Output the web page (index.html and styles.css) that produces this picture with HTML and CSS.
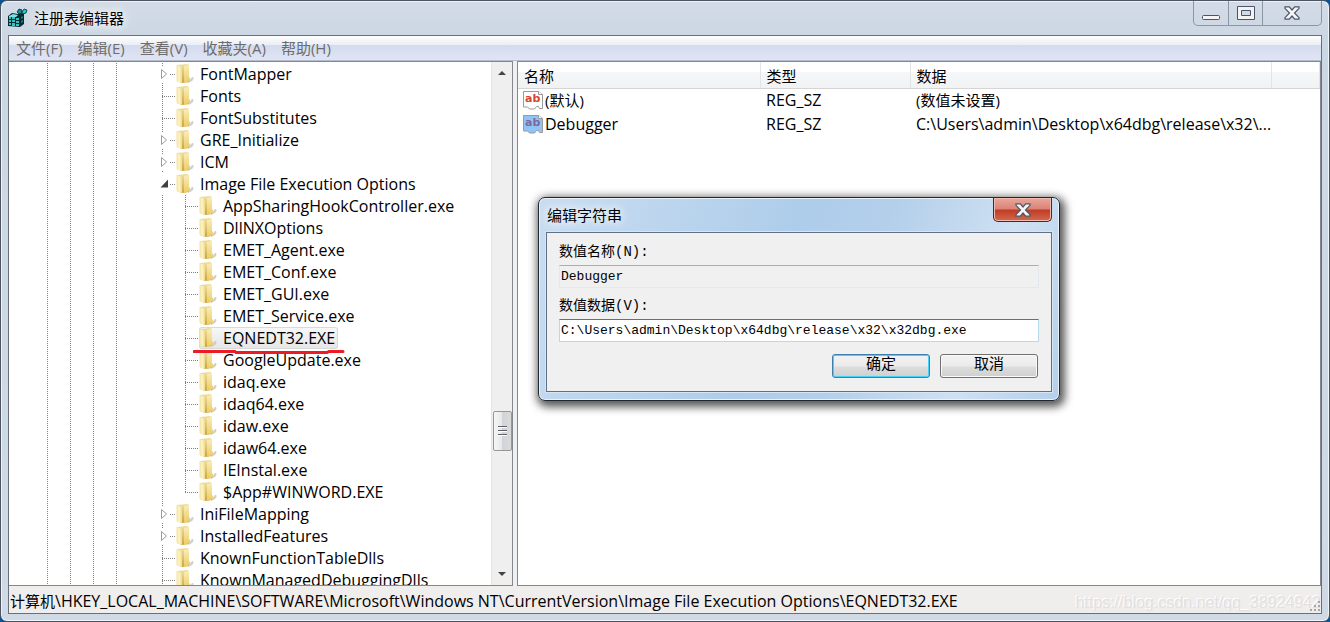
FILE: index.html
```html
<!DOCTYPE html>
<html lang="zh-CN">
<head>
    <meta charset="UTF-8">
    <meta name="viewport" content="width=device-width, initial-scale=1.0">
    <title>注册表编辑器</title>
    <link rel="stylesheet" href="styles.css">
</head>
<body>
    <svg class="defs" width="0" height="0" aria-hidden="true">
        <defs>
            <linearGradient id="gold" x1="0" x2="1" y1="0" y2="0">
                <stop offset="0" stop-color="#f3e3a0"/>
                <stop offset=".5" stop-color="#fdf3c4"/>
                <stop offset="1" stop-color="#f0d98a"/>
            </linearGradient>
            <linearGradient id="flap" x1="0" x2="0" y1="0" y2="1">
                <stop offset="0" stop-color="#f9edb8"/>
                <stop offset="1" stop-color="#eccb62"/>
            </linearGradient>
            <linearGradient id="fold" x1="0" x2="0" y1="0" y2="1">
                <stop offset="0" stop-color="#efdf9f"/>
                <stop offset="1" stop-color="#c9a544"/>
            </linearGradient>
            <symbol id="folder" viewBox="0 0 18 20">
                <path d="M12 18l4-5c2 0 2 2 0 4l-4 2z" fill="#c4c4c4" opacity=".8"/>
                <path d="M1 1l10-1 2 1v17l-7 1-5-2z" fill="url(#fold)"/>
                <path d="M8 2l5-1v12l1 1v3l-6 2z" fill="url(#flap)"/>
                <path d="M.5 1l5.500 2v16L.5 17z" fill="url(#gold)"/>
            </symbol>
            <symbol id="string" viewBox="0 0 20 20">
                <path d="M.5 1.500h15l4 3v14h-3l-1-2h-2l-2 2.500h-5l-2-2h-4z" fill="currentColor" stroke="#9a9a9a"/>
                <path d="M15.500 1.500v3h4" fill="#fff" stroke="#9a9a9a"/>
            </symbol>
            <symbol id="cross" viewBox="0 0 16 14">
                <path d="M1 .8h4.300L8 4 10.700.8H15v1.500L10.500 7l4.500 4.700v1.500h-4.300L8 10l-2.700 3.200H1v-1.500L5.500 7 1 2.300z" fill="#f6f6f6" stroke="#4c5567" stroke-width="1.200"/>
            </symbol>
        </defs>
    </svg>

    <div class="window">
        <header class="title-bar">
            <svg class="app-icon" viewBox="0 0 20 20" aria-hidden="true">
                <path d="M0 8l4-3 6 1 4-1 2 1v10l-4 3-12-1z" fill="#062a2c"/>
                <path d="M1 8l4-2 5 1-2 2H1z" fill="#7fe3e3"/>
                <path d="M1 9h2v2H1zM4 9h3v2H4zM8 10h3v2H8zM1 12h2v2H1zM4 12h3v2H4zM8 13h3v2H8zM1 15h2v2H1zM4 15h3v3H4zM8 16h3v2H8z" fill="#2fc4c6"/>
                <path d="M13 9l2-1v2l-2 1zM13 13l2-1v2l-2 1z" fill="#0e7f84"/>
                <path d="M9 4l2-3 3 1v3l-3 1z" fill="#158a8e" stroke="#062a2c" stroke-width=".8"/>
                <path d="M14 4l2-3 3 1-1 3-3 1z" fill="#2fc4c6" stroke="#062a2c" stroke-width=".8"/>
            </svg>
            <h1 class="title">注册表编辑器</h1>
            <div class="window-buttons">
                <button class="win-btn" aria-label="最小化">
                    <svg width="18" height="6" viewBox="0 0 18 6"><rect x=".5" y=".5" width="17" height="4" rx="1" fill="#f4f4f4" stroke="#4c5567"/></svg>
                </button>
                <button class="win-btn" aria-label="最大化">
                    <svg width="18" height="14" viewBox="0 0 18 14"><path d="M.5.5h17v13H.5zM4.500 4.500v5h9v-5z" fill="#f4f4f4" fill-rule="evenodd" stroke="#4c5567"/></svg>
                </button>
                <button class="win-btn win-close" aria-label="关闭">
                    <svg width="16" height="14"><use href="#cross"/></svg>
                </button>
            </div>
        </header>

        <div class="client">
            <nav class="menu-bar">
                <button>文件(F)</button>
                <button>编辑(E)</button>
                <button>查看(V)</button>
                <button>收藏夹(A)</button>
                <button>帮助(H)</button>
            </nav>

            <main class="panes">
                <section class="tree-pane">
                    <ul class="tree" id="tree"></ul>
                    <div class="scrollbar">
                        <span class="arrow-up"></span>
                        <span class="thumb"><i></i><i></i><i></i></span>
                        <span class="arrow-down"></span>
                    </div>
                </section>

                <section class="list-pane">
                    <table class="values">
                        <thead>
                            <tr><th class="col-name">名称</th><th class="col-type">类型</th><th class="col-data">数据</th><th></th></tr>
                        </thead>
                        <tbody>
                            <tr>
                                <td><span class="value-name"><span class="value-icon"><svg><use href="#string"/></svg><b>ab</b></span><span class="cjk">(默认)</span></span></td>
                                <td>REG_SZ</td>
                                <td class="cjk">(数值未设置)</td>
                                <td></td>
                            </tr>
                            <tr>
                                <td><span class="value-name"><span class="value-icon selected"><svg><use href="#string"/></svg><b>ab</b></span>Debugger</span></td>
                                <td>REG_SZ</td>
                                <td>C:\Users\admin\Desktop\x64dbg\release\x32\...</td>
                                <td></td>
                            </tr>
                        </tbody>
                    </table>
                </section>
            </main>

            <footer class="status-bar">
                <span class="cjk">计算机</span><span>\HKEY_LOCAL_MACHINE\SOFTWARE\Microsoft\Windows NT\CurrentVersion\Image File Execution Options\EQNEDT32.EXE</span>
                <span class="watermark">https://blog.csdn.net/qq_38924942</span>
                <svg class="grip" viewBox="0 0 12 12" aria-hidden="true"><path d="M9 1h2v2H9zM5 5h2v2H5zM9 5h2v2H9zM1 9h2v2H1zM5 9h2v2H5zM9 9h2v2H9z" fill="#a5a5ab"/></svg>
            </footer>
        </div>
    </div>

    <form class="dialog" role="dialog" aria-labelledby="dialog-title">
        <div class="dialog-bar">
            <h2 class="title" id="dialog-title">编辑字符串</h2>
            <button type="button" class="dialog-close" aria-label="关闭"><svg width="16" height="14"><use href="#cross"/></svg></button>
        </div>
        <div class="dialog-body">
            <label for="value-name">数值名称(N):</label>
            <input id="value-name" type="text" value="Debugger" readonly>
            <label for="value-data">数值数据(V):</label>
            <input id="value-data" type="text" value="C:\Users\admin\Desktop\x64dbg\release\x32\x32dbg.exe">
            <div class="dialog-buttons">
                <button type="button" class="default">确定</button>
                <button type="button">取消</button>
            </div>
        </div>
    </form>

    <script>
        // [名称, 层级, 状态]
        const keys = [
            ["FontMapper", 0, "closed"],
            ["Fonts", 0],
            ["FontSubstitutes", 0],
            ["GRE_Initialize", 0, "closed"],
            ["ICM", 0, "closed"],
            ["Image File Execution Options", 0, "open"],
            ["AppSharingHookController.exe", 1],
            ["DllNXOptions", 1],
            ["EMET_Agent.exe", 1],
            ["EMET_Conf.exe", 1],
            ["EMET_GUI.exe", 1],
            ["EMET_Service.exe", 1],
            ["EQNEDT32.EXE", 1, "selected"],
            ["GoogleUpdate.exe", 1],
            ["idaq.exe", 1],
            ["idaq64.exe", 1],
            ["idaw.exe", 1],
            ["idaw64.exe", 1],
            ["IEInstal.exe", 1],
            ["$App#WINWORD.EXE", 1, "last"],
            ["IniFileMapping", 0, "closed"],
            ["InstalledFeatures", 0, "closed"],
            ["KnownFunctionTableDlls", 0],
            ["KnownManagedDebuggingDlls", 0]
        ];

        const toggles = {
            closed: '<svg class="toggle" viewBox="0 0 9 12"><path d="M1.500 1.500v9l5-4.500z" fill="#fff" stroke="#9b9b9b"/></svg>',
            open: '<svg class="toggle" viewBox="0 0 9 12"><path d="M8 1.500v8H.5z" fill="#404040"/></svg>'
        };
        const mark = '<svg class="mark" viewBox="0 0 152 4"><path d="M1 1.500h41l1 1h91l2-1h14" fill="none" stroke="#ed1c24" stroke-width="3" stroke-linecap="round"/></svg>';

        // 渲染注册表项
        document.getElementById('tree').innerHTML = keys.map(([name, level, state = ""]) => `
            <li class="key ${state}">
                ${'<span class="line"></span>'.repeat(4)}
                <span class="gap"></span>
                ${level ? '<span class="line"></span>' : ''}
                <span class="branch">${toggles[state] || ''}</span>
                <span class="label"><svg class="folder"><use href="#folder"/></svg>${name}${state === "selected" ? mark : ''}</span>
            </li>`).join('');
    </script>
</body>
</html>
```
FILE: styles.css
```css
:root {
    --frame: #cfdae6;
    --edge: #6a6f7a;
    --face: #f0f0f0;
    --dots: #808080;
}

* {
    box-sizing: border-box;
}

body {
    margin: 0;
    height: 100vh;
    overflow: hidden;
    background: #0b5296;
    color: #000;
    font: 16px/22px "Open Sans", "Noto Sans CJK SC", sans-serif;
}

button,
input {
    font: inherit;
    color: inherit;
    padding: 0;
    margin: 0;
}

.defs {
    position: absolute;
}

.cjk {
    font-size: 15px;
}

.window {
    height: 100vh;
    display: flex;
    flex-direction: column;
    padding: 0 7px 7px;
    border: 1px solid #4e5560;
    border-radius: 7px;
    background: linear-gradient(#d3dbe6, #cbd7e3 40px, var(--frame));
    box-shadow: inset 0 0 0 1px #eef3f8;
}

.title-bar {
    height: 34px;
    display: flex;
    align-items: center;
    gap: 6px;
    flex: none;
}

.app-icon {
    width: 20px;
    height: 20px;
}

.title {
    margin: 0;
    font-size: 15px;
    font-weight: normal;
    text-shadow: 0 0 8px #fff, 0 0 12px #fff;
}

.window-buttons {
    display: flex;
    align-self: flex-start;
    margin-left: auto;
    border: 1px solid #8c95a4;
    border-top: 0;
    border-radius: 0 0 5px 5px;
}

.win-btn {
    width: 34px;
    height: 24px;
    display: flex;
    align-items: center;
    justify-content: center;
    border: 0;
    border-left: 1px solid #8c95a4;
    background: none;
}

.win-btn:first-child {
    border-left: 0;
    align-items: flex-end;
    padding-bottom: 4px;
}

.win-close {
    width: 59px;
}

.client {
    flex: 1;
    min-height: 0;
    display: flex;
    flex-direction: column;
    border: 1px solid var(--edge);
    background: var(--face);
}

.menu-bar {
    height: 25px;
    flex: none;
    display: flex;
    gap: 15px;
    padding-left: 7px;
    background: linear-gradient(#fff, #e9edf6 9px, #d4dbee 9px, #e0e5f5);
    border-bottom: 1px solid #b6bcd0;
}

.menu-bar button {
    border: 0;
    background: none;
    color: #6d6d6d;
    font-size: 15px;
    white-space: nowrap;
}

.panes {
    flex: 1;
    min-height: 0;
    display: flex;
    gap: 4px;
}

.tree-pane,
.list-pane {
    background: #fff;
    border: 1px solid #828790;
    overflow: hidden;
}

.tree-pane {
    width: 40%;
    max-width: 504px;
    display: flex;
    border-left: 0;
}

.list-pane {
    flex: 1;
    min-width: 0;
}

.tree {
    flex: 1;
    margin: 0;
    padding: 1px 0 0 16px;
    list-style: none;
}

.key {
    height: 22px;
    display: flex;
    white-space: nowrap;
}

.line,
.gap,
.branch {
    width: 23px;
    height: 22px;
    flex: none;
}

.line,
.branch {
    background: repeating-linear-gradient(var(--dots) 0 1px, transparent 1px 2px) 100% 0 / 1px 100% no-repeat;
}

.branch {
    width: 36px;
    display: flex;
    align-items: center;
    padding-left: 19px;
    background:
        repeating-linear-gradient(var(--dots) 0 1px, transparent 1px 2px) 22px 0 / 1px 100% no-repeat,
        repeating-linear-gradient(90deg, var(--dots) 0 1px, transparent 1px 2px) 22px 11px / 14px 1px no-repeat;
}

.last .branch {
    background-size: 1px 11px, 14px 1px;
}

.toggle {
    width: 11px;
    height: 16px;
    padding: 2px 1px;
    background: #fff;
}

.open .toggle {
    height: 22px;
}

.label {
    position: relative;
    display: flex;
    align-items: center;
    padding-right: 3px;
    border-radius: 3px;
}

.selected .label {
    background: linear-gradient(#f8f8f8, #e5e5e5);
    box-shadow: inset 0 0 0 1px #d9d9d9;
}

.folder {
    width: 18px;
    height: 20px;
    margin-right: 6px;
}

.mark {
    position: absolute;
    left: -6px;
    bottom: -5px;
    width: 152px;
    height: 4px;
    z-index: 1;
}

.scrollbar {
    width: 21px;
    flex: none;
    display: flex;
    flex-direction: column;
    align-items: center;
    padding: 9px 1px;
    background: #efefef;
    border-left: 1px solid #e5e5e5;
}

.arrow-up,
.arrow-down {
    border: 4px solid transparent;
}

.arrow-up {
    border-top: 0;
    border-bottom-color: #444;
}

.arrow-down {
    border-bottom: 0;
    border-top-color: #444;
    margin-top: auto;
}

.thumb {
    width: 19px;
    height: 40px;
    margin-top: 336px;
    display: flex;
    flex-direction: column;
    align-items: center;
    justify-content: center;
    gap: 2px;
    border: 1px solid #979797;
    border-radius: 2px;
    background: linear-gradient(90deg, #f6f6f6, #e8e8e9 45%, #d2d3d6 50%, #d9dadc);
}

.thumb i {
    width: 9px;
    height: 2px;
    background: #5c6066;
    border-bottom: 1px solid #fff;
}

.values {
    width: 100%;
    border-collapse: collapse;
    table-layout: fixed;
}

.values th {
    height: 26px;
    padding: 2px 6px 0;
    text-align: left;
    font-weight: normal;
    font-size: 15px;
    background: linear-gradient(#fff 10px, #f6f7f8 10px, #f1f2f4);
    border-bottom: 1px solid #d5d5d5;
    border-right: 1px solid #e3e4e6;
}

.values td {
    height: 24px;
    padding: 0 6px;
    white-space: nowrap;
}

.values .col-name {
    width: 242px;
}

.values .col-type {
    width: 150px;
}

.values .col-data {
    width: 361px;
}

.value-name {
    display: flex;
    align-items: center;
    gap: 2px;
    margin-left: -1px;
}

.value-icon {
    position: relative;
    width: 20px;
    height: 20px;
    color: #fff;
}

.value-icon svg {
    width: 20px;
    height: 20px;
    display: block;
}

.value-icon b {
    position: absolute;
    left: 2px;
    top: 2px;
    color: #d9442c;
    font: bold 11px/14px "DejaVu Sans", sans-serif;
}

.value-icon.selected {
    color: #8fc4f8;
}

.value-icon.selected b {
    color: #80689a;
}

.status-bar {
    position: relative;
    height: 27px;
    flex: none;
    display: flex;
    align-items: center;
    padding: 2px 2px 0 1px;
    background: #f0eded;
    white-space: nowrap;
}

.watermark {
    position: absolute;
    right: 0;
    bottom: 0;
    color: #e3e0e0;
    font: 16px/20px "Liberation Sans", sans-serif;
    text-shadow: -1px -1px #fff;
}

.grip {
    position: absolute;
    right: 0;
    bottom: 1px;
    width: 12px;
    height: 12px;
}

.dialog {
    position: absolute;
    left: 538px;
    top: 197px;
    width: 522px;
    padding: 0 7px 8px;
    border: 1px solid #22272e;
    border-radius: 7px;
    background: linear-gradient(110deg, #c9ddf1, #aecdea 45%, #b3cfea 60%, #cfe0f2 82%, #b4d0ec);
    box-shadow: inset 0 0 0 1px #e8f2fb, 2px 3px 9px 3px rgba(0, 0, 0, .65);
}

.dialog-bar {
    height: 34px;
    display: flex;
    align-items: center;
    justify-content: space-between;
    padding-left: 1px;
}

.dialog-close {
    align-self: flex-start;
    width: 59px;
    height: 24px;
    display: flex;
    align-items: center;
    justify-content: center;
    border: 1px solid #54202a;
    border-top: 0;
    border-radius: 0 0 5px 5px;
    background: linear-gradient(#eba69b, #d98376 11px, #c33a24 12px, #cf6a4e);
    box-shadow: inset 0 0 0 1px #eebbae;
}

.dialog-body {
    display: flex;
    flex-direction: column;
    padding: 8px 12px 13px;
    border: 1px solid #5f6f84;
    background: var(--face);
    box-shadow: 0 0 0 1px #d7e6f5;
    font: 14px/22px "Liberation Mono", "Noto Sans CJK SC", monospace;
}

.dialog-body label {
    margin-bottom: 2px;
}

.dialog-body input {
    height: 23px;
    margin-bottom: 7px;
    padding: 0 1px;
    border: 1px solid #e3e9ef;
    border-top-color: #abadb3;
    background: var(--face);
    font-size: 13px;
    outline: 0;
}

#value-data {
    margin-bottom: 12px;
    border-color: #b7d9ed;
    border-top-color: #3d7bad;
    background: #fff;
}

.dialog-buttons {
    display: flex;
    justify-content: flex-end;
    gap: 10px;
    padding-right: 1px;
}

.dialog-buttons button {
    width: 98px;
    height: 24px;
    border: 1px solid #707070;
    border-radius: 3px;
    background: linear-gradient(#f2f2f2, #ebebeb 11px, #dddddd 12px, #cfcfcf);
    box-shadow: inset 0 0 0 1px #fafafa;
    font-size: 15px;
    line-height: 20px;
}

.dialog-buttons .default {
    border-color: #3c7fb1;
    box-shadow: inset 0 0 0 1px #48d0f7;
}
```
